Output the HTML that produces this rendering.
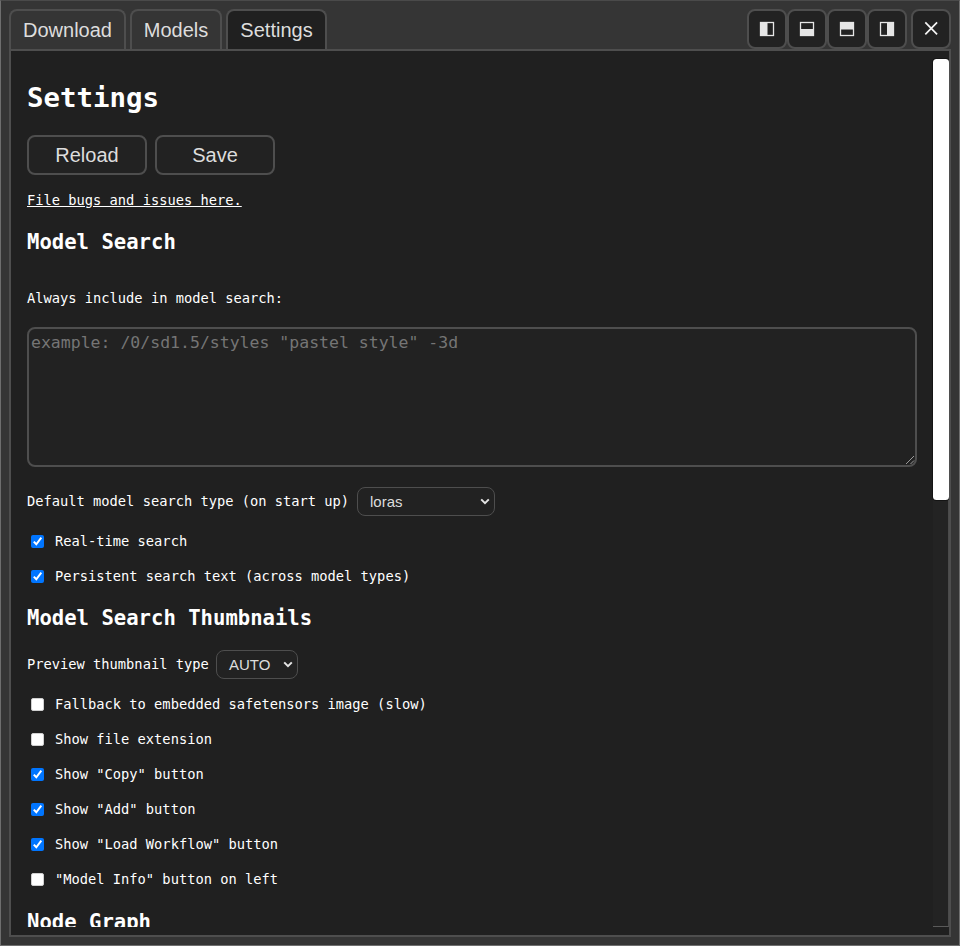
<!DOCTYPE html>
<html lang="en">
<head>
<meta charset="utf-8">
<title>Model Manager - Settings</title>
<style>
*{box-sizing:border-box;}
html,body{margin:0;padding:0;width:960px;height:946px;overflow:hidden;background:#353535;}
body{position:relative;font-family:"DejaVu Sans Mono","Liberation Mono",monospace;color:#fff;font-size:13.72px;}
.frame{position:absolute;left:0;top:0;width:960px;height:946px;background:#353535;border:1px solid #6e6e6e;border-top-color:#4a4a4a;}
.abs{position:absolute;}
.tab{position:absolute;top:9px;height:41px;border:2px solid #4e4e4e;border-bottom:none;border-radius:8px 8px 0 0;background:#353535;color:#ddd;font-family:"Liberation Sans",sans-serif;font-size:20px;line-height:23px;padding:8px 0 0 0;text-align:center;}
.tab.active{background:#202020;}
.hbtn{position:absolute;top:9px;height:40px;width:40px;border:2px solid #4e4e4e;border-radius:8px;background:#222;}
.content{position:absolute;left:9px;top:49px;width:942px;height:888px;border:2px solid #4e4e4e;background:#202020;}
.scroller{position:absolute;left:11px;top:59px;width:938px;height:868px;overflow:hidden;}
.track{position:absolute;left:933px;top:59px;width:16px;height:868px;background:#232323;border-bottom:1px solid #5a5a5a;border-right:1px solid #4a4a4a;}
.thumb{position:absolute;left:933px;top:59px;width:16px;height:441px;background:#fff;border-radius:3.500px;box-shadow:0 0 0 1px #141414;clip-path:inset(-1px 0 -1px -1px);}
h1,h2{margin:0;font-weight:bold;position:absolute;left:27px;white-space:nowrap;}
h1{font-size:27.4px;line-height:34px;}
h2{font-size:20.6px;line-height:26px;}
.t{position:absolute;white-space:nowrap;line-height:18px;}
.btn{position:absolute;height:40px;width:120px;border:2px solid #4e4e4e;border-radius:8px;background:#222;color:#ddd;font-family:"Liberation Sans",sans-serif;font-size:20px;line-height:23px;padding-top:7px;text-align:center;}
.ta{position:absolute;left:27px;top:327px;width:890px;height:140px;border:2px solid #4e4e4e;border-radius:8px;background:#222;color:#757575;padding:3px 2px;font-size:16.5px;line-height:21px;white-space:nowrap;}
.sel{position:absolute;height:29px;border:1px solid #4e4e4e;border-radius:8px;background:#222;color:#ddd;font-family:"Liberation Sans",sans-serif;font-size:15px;line-height:18px;padding:5px 0 0 12px;}
.cb{position:absolute;left:31px;width:13px;height:13px;border-radius:2px;background:#fff;border:1px solid #cfcfcf;}
.cb.on{background:#0075ff;border:none;border-radius:2px;}
.cb svg{position:absolute;left:0;top:0;}
</style>
</head>
<body>
<div class="frame"></div>

<div class="abs" style="left:9px;top:49px;width:942px;height:888px;background:#202020;"></div>

<div class="tab" style="left:9px;width:117px;">Download</div>
<div class="tab" style="left:130px;width:92px;">Models</div>
<div class="tab active" style="left:226px;width:101px;">Settings</div>

<div class="hbtn" style="left:747px;"><svg width="36" height="36" viewBox="0 0 36 36"><rect x="11.5" y="11.500" width="13" height="13" fill="none" stroke="#e6e6e6" stroke-width="1.300"/><rect x="12" y="12" width="6.5" height="12" fill="#e6e6e6"/></svg></div>
<div class="hbtn" style="left:787px;"><svg width="36" height="36" viewBox="0 0 36 36"><rect x="11.5" y="11.5" width="13" height="13" fill="none" stroke="#e6e6e6" stroke-width="1.300"/><rect x="12" y="18" width="12" height="6.5" fill="#e6e6e6"/></svg></div>
<div class="hbtn" style="left:827px;"><svg width="36" height="36" viewBox="0 0 36 36"><rect x="11.5" y="11.5" width="13" height="13" fill="none" stroke="#e6e6e6" stroke-width="1.300"/><rect x="12" y="12" width="12" height="6.500" fill="#e6e6e6"/></svg></div>
<div class="hbtn" style="left:867px;"><svg width="36" height="36" viewBox="0 0 36 36"><rect x="11.5" y="11.5" width="13" height="13" fill="none" stroke="#e6e6e6" stroke-width="1.300"/><rect x="18" y="12" width="6.5" height="12" fill="#e6e6e6"/></svg></div>
<div class="hbtn" style="left:911px;"><svg width="36" height="36" viewBox="0 0 36 36"><path d="M12.300 11.400 L24.100 23.400 M24.100 11.400 L12.300 23.400" stroke="#f4f4f4" stroke-width="1.700" fill="none"/></svg></div>

<div class="abs" style="left:9px;top:49px;width:942px;height:888px;border:2px solid #4e4e4e;"></div>
<div class="scroller">
<div class="abs" style="left:-11px;top:-59px;width:960px;height:1200px;">
  <h1 style="top:81px;">Settings</h1>
  <div class="btn" style="left:27px;top:135px;">Reload</div>
  <div class="btn" style="left:155px;top:135px;">Save</div>
  <a class="t" href="#" style="left:27px;top:191px;text-decoration:underline;color:#fff;">File bugs and issues here.</a>
  <h2 style="top:229px;">Model Search</h2>
  <div class="t" style="left:27px;top:289px;">Always include in model search:</div>
  <div class="ta">example: /0/sd1.5/styles "pastel style" -3d<svg class="abs" style="right:0px;bottom:0px;" width="10" height="10" viewBox="0 0 10 10"><path d="M9 1 L1 9 M9 5.500 L5.500 9" stroke="#9a9a9a" stroke-width="1"/></svg></div>
  <div class="t" style="left:27px;top:492px;">Default model search type (on start up)</div>
  <div class="sel" style="left:357px;top:487px;width:138px;">loras<svg class="abs" style="right:3px;top:10px;" width="12" height="8" viewBox="0 0 12 8"><path d="M2.200 1.400 L6 5.200 L9.800 1.400" stroke="#e4e4e4" stroke-width="2" fill="none"/></svg></div>

  <div class="cb on" style="top:535px;"><svg width="13" height="13" viewBox="0 0 13 13"><path d="M2.800 6.600 L5.300 9.300 L10.300 2.700" stroke="#fff" stroke-width="2" fill="none"/></svg></div>
  <div class="t" style="left:55px;top:532px;">Real-time search</div>
  <div class="cb on" style="top:570px;"><svg width="13" height="13" viewBox="0 0 13 13"><path d="M2.800 6.600 L5.300 9.300 L10.300 2.700" stroke="#fff" stroke-width="2" fill="none"/></svg></div>
  <div class="t" style="left:55px;top:567px;">Persistent search text (across model types)</div>

  <h2 style="top:605px;">Model Search Thumbnails</h2>
  <div class="t" style="left:27px;top:655px;">Preview thumbnail type</div>
  <div class="sel" style="left:216px;top:650px;width:82px;">AUTO<svg class="abs" style="right:3px;top:10px;" width="12" height="8" viewBox="0 0 12 8"><path d="M2.200 1.400 L6 5.200 L9.800 1.400" stroke="#e4e4e4" stroke-width="2" fill="none"/></svg></div>

  <div class="cb" style="top:698px;"></div>
  <div class="t" style="left:55px;top:695px;">Fallback to embedded safetensors image (slow)</div>
  <div class="cb" style="top:733px;"></div>
  <div class="t" style="left:55px;top:730px;">Show file extension</div>
  <div class="cb on" style="top:768px;"><svg width="13" height="13" viewBox="0 0 13 13"><path d="M2.800 6.600 L5.300 9.300 L10.300 2.700" stroke="#fff" stroke-width="2" fill="none"/></svg></div>
  <div class="t" style="left:55px;top:765px;">Show "Copy" button</div>
  <div class="cb on" style="top:803px;"><svg width="13" height="13" viewBox="0 0 13 13"><path d="M2.800 6.600 L5.300 9.300 L10.300 2.700" stroke="#fff" stroke-width="2" fill="none"/></svg></div>
  <div class="t" style="left:55px;top:800px;">Show "Add" button</div>
  <div class="cb on" style="top:838px;"><svg width="13" height="13" viewBox="0 0 13 13"><path d="M2.800 6.600 L5.300 9.300 L10.300 2.700" stroke="#fff" stroke-width="2" fill="none"/></svg></div>
  <div class="t" style="left:55px;top:835px;">Show "Load Workflow" button</div>
  <div class="cb" style="top:873px;"></div>
  <div class="t" style="left:55px;top:870px;">"Model Info" button on left</div>

  <h2 style="top:909px;">Node Graph</h2>
</div>
</div>

<div class="track"></div>
<div class="thumb"></div>
</body>
</html>
